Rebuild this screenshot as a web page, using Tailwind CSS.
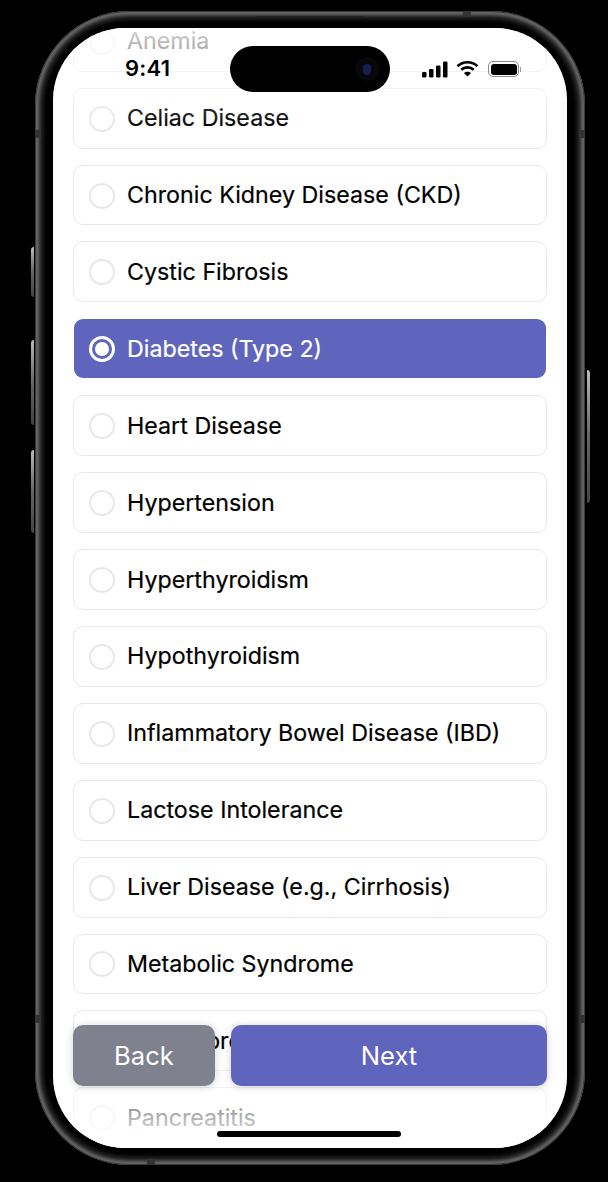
<!DOCTYPE html>
<html lang="en">
<head>
    <meta charset="UTF-8">
    <meta name="viewport" content="width=device-width, initial-scale=1.0">
    <title>Health Conditions</title>
    <script src="https://cdn.jsdelivr.net/npm/@tailwindcss/browser@4"></script>
</head>
<body class="bg-black font-['Inter',sans-serif] overflow-hidden">

<div class="w-[608px] h-[1182px] pt-[11px] pl-[35px]">
    <!-- phone body -->
    <div class="relative w-[550px] h-[1154px] rounded-[94px] bg-black p-[17px_18px] shadow-[inset_0_0_0_1px_#3a3a3a,inset_0_0_3px_4px_#666666,inset_0_0_4px_8px_#2a2a2a]">
        <!-- side buttons -->
        <div class="absolute left-[-4px] top-[236px] w-[3px] h-[50px] rounded-l-sm bg-gradient-to-b from-[#bbb] via-[#666] to-[#444]"></div>
        <div class="absolute left-[-4px] top-[329px] w-[3px] h-[85px] rounded-l-sm bg-gradient-to-b from-[#bbb] via-[#666] to-[#444]"></div>
        <div class="absolute left-[-4px] top-[439px] w-[3px] h-[83px] rounded-l-sm bg-gradient-to-b from-[#bbb] via-[#666] to-[#444]"></div>
        <div class="absolute right-[-5px] top-[359px] w-[3px] h-[133px] rounded-r-sm bg-gradient-to-b from-[#bbb] via-[#666] to-[#444]"></div>
        <!-- antenna bands -->
        <div class="absolute left-0 top-[119px] w-[6px] h-[8px] bg-[#333]"></div>
        <div class="absolute right-0 top-[119px] w-[6px] h-[8px] bg-[#333]"></div>
        <div class="absolute left-0 top-[1004px] w-[6px] h-[8px] bg-[#333]"></div>
        <div class="absolute right-0 top-[1004px] w-[6px] h-[8px] bg-[#333]"></div>
        <div class="absolute left-[428px] top-0 w-[8px] h-[6px] bg-[#333]"></div>
        <div class="absolute left-[112px] bottom-0 w-[8px] h-[6px] bg-[#333]"></div>
        <!-- speaker slit -->
        <div class="absolute left-[220px] top-[5px] w-[110px] h-px bg-[#222]"></div>

        <!-- screen -->
        <div class="relative w-[514px] h-[1120px] rounded-[72px] bg-white overflow-hidden">
            <ul class="mx-[20px] mt-[-17.2px] flex flex-col gap-4 text-[23.25px] font-normal [-webkit-text-stroke:0.2px_currentColor] text-black">
                <li class="h-[60.9px] flex items-center gap-3 pl-[15px] pt-px rounded-[10px] border border-[#e8e8e8]"><span class="w-[26px] h-[26px] rounded-full border-2 border-[#e8e8e8]"></span>Anemia</li>
                <li class="h-[60.9px] flex items-center gap-3 pl-[15px] pt-px rounded-[10px] border border-[#e8e8e8]"><span class="w-[26px] h-[26px] rounded-full border-2 border-[#e8e8e8]"></span>Celiac Disease</li>
                <li class="h-[60.9px] flex items-center gap-3 pl-[15px] pt-px rounded-[10px] border border-[#e8e8e8]"><span class="w-[26px] h-[26px] rounded-full border-2 border-[#e8e8e8]"></span>Chronic Kidney Disease (CKD)</li>
                <li class="h-[60.9px] flex items-center gap-3 pl-[15px] pt-px rounded-[10px] border border-[#e8e8e8]"><span class="w-[26px] h-[26px] rounded-full border-2 border-[#e8e8e8]"></span>Cystic Fibrosis</li>
                <!-- selected row -->
                <li class="h-[58.9px] my-px mx-px flex items-center gap-3 pl-[15px] pt-px rounded-[9px] bg-[#5f64bd] text-white"><span class="w-[26px] h-[26px] rounded-full border-[3px] border-white flex items-center justify-center"><span class="w-[14px] h-[14px] rounded-full bg-white"></span></span>Diabetes (Type 2)</li>
                <li class="h-[60.9px] flex items-center gap-3 pl-[15px] pt-px rounded-[10px] border border-[#e8e8e8]"><span class="w-[26px] h-[26px] rounded-full border-2 border-[#e8e8e8]"></span>Heart Disease</li>
                <li class="h-[60.9px] flex items-center gap-3 pl-[15px] pt-px rounded-[10px] border border-[#e8e8e8]"><span class="w-[26px] h-[26px] rounded-full border-2 border-[#e8e8e8]"></span>Hypertension</li>
                <li class="h-[60.9px] flex items-center gap-3 pl-[15px] pt-px rounded-[10px] border border-[#e8e8e8]"><span class="w-[26px] h-[26px] rounded-full border-2 border-[#e8e8e8]"></span>Hyperthyroidism</li>
                <li class="h-[60.9px] flex items-center gap-3 pl-[15px] pt-px rounded-[10px] border border-[#e8e8e8]"><span class="w-[26px] h-[26px] rounded-full border-2 border-[#e8e8e8]"></span>Hypothyroidism</li>
                <li class="h-[60.9px] flex items-center gap-3 pl-[15px] pt-px rounded-[10px] border border-[#e8e8e8]"><span class="w-[26px] h-[26px] rounded-full border-2 border-[#e8e8e8]"></span>Inflammatory Bowel Disease (IBD)</li>
                <li class="h-[60.9px] flex items-center gap-3 pl-[15px] pt-px rounded-[10px] border border-[#e8e8e8]"><span class="w-[26px] h-[26px] rounded-full border-2 border-[#e8e8e8]"></span>Lactose Intolerance</li>
                <li class="h-[60.9px] flex items-center gap-3 pl-[15px] pt-px rounded-[10px] border border-[#e8e8e8]"><span class="w-[26px] h-[26px] rounded-full border-2 border-[#e8e8e8]"></span>Liver Disease (e.g., Cirrhosis)</li>
                <li class="h-[60.9px] flex items-center gap-3 pl-[15px] pt-px rounded-[10px] border border-[#e8e8e8]"><span class="w-[26px] h-[26px] rounded-full border-2 border-[#e8e8e8]"></span>Metabolic Syndrome</li>
                <li class="h-[60.9px] flex items-center gap-3 pl-[15px] pt-px rounded-[10px] border border-[#e8e8e8]"><span class="w-[26px] h-[26px] rounded-full border-2 border-[#e8e8e8]"></span>Osteoporosis</li>
                <li class="h-[60.9px] flex items-center gap-3 pl-[15px] pt-px rounded-[10px] border border-[#e8e8e8]"><span class="w-[26px] h-[26px] rounded-full border-2 border-[#e8e8e8]"></span>Pancreatitis</li>
            </ul>

            <!-- fades over the scrolling list -->
            <div class="absolute inset-x-0 top-0 h-[100px] bg-gradient-to-b from-white/85 to-white/0"></div>
            <div class="absolute inset-x-0 bottom-0 h-[100px] bg-gradient-to-t from-white to-white/0"></div>

            <!-- status bar -->
            <div class="absolute left-[72px] top-[27px] text-[22px] leading-[26px] font-semibold text-black tracking-[0.2px]">9:41</div>
            <div class="absolute left-[177px] top-[18px] w-[160px] h-[46px] rounded-full bg-black flex items-center justify-end pr-[11px]">
                <div class="w-[24px] h-[24px] rounded-full bg-[#07070c] flex items-center justify-center">
                    <div class="w-[8px] h-[11px] rounded-full bg-[#16204f]"></div>
                </div>
            </div>
            <svg class="absolute left-[369px] top-[33px]" width="26" height="17" viewBox="0 0 26 17" fill="#000">
                <rect x="0" y="11" width="4.5" height="5.5" rx="1.2"/>
                <rect x="7" y="8" width="4.5" height="8.5" rx="1.2"/>
                <rect x="14" y="4.5" width="4.5" height="12" rx="1.2"/>
                <rect x="21" y="0.5" width="4.5" height="16" rx="1.2"/>
            </svg>
            <svg class="absolute left-[403px] top-[32px]" width="23" height="17" viewBox="0 0 23 17" fill="none" stroke="#000" stroke-width="2.6">
                <path d="M1.5 6.2C7 1 16 1 21.5 6.2"/>
                <path d="M5.2 9.8C8.8 6.6 14.2 6.6 17.8 9.8"/>
                <path d="M11.5 16.5L7.9 12.9C10 11.3 13 11.3 15.1 12.9Z" fill="#000" stroke="none"/>
            </svg>
            <div class="absolute left-[435px] top-[33px] flex items-center">
                <div class="w-[31px] h-[16px] rounded-[5px] border border-[#888] p-[1.5px]">
                    <div class="w-full h-full rounded-[3px] bg-black"></div>
                </div>
                <div class="ml-px w-px h-[5px] bg-[#999]"></div>
            </div>

            <!-- footer actions -->
            <div class="absolute left-5 top-[997px] flex gap-4 text-[25.6px] text-white">
                <button class="w-[142px] h-[61px] pt-px rounded-[10px] bg-[#80818e] shadow-[0_1px_8px_rgba(0,0,0,0.18)]">Back</button>
                <button class="w-[316px] h-[61px] pt-px rounded-[10px] bg-[#5f64bd] shadow-[0_1px_8px_rgba(0,0,0,0.18)]">Next</button>
            </div>

            <!-- home indicator -->
            <div class="absolute left-[164px] top-[1103px] w-[184px] h-[6px] rounded-full bg-black"></div>
        </div>
    </div>
</div>

</body>
</html>
